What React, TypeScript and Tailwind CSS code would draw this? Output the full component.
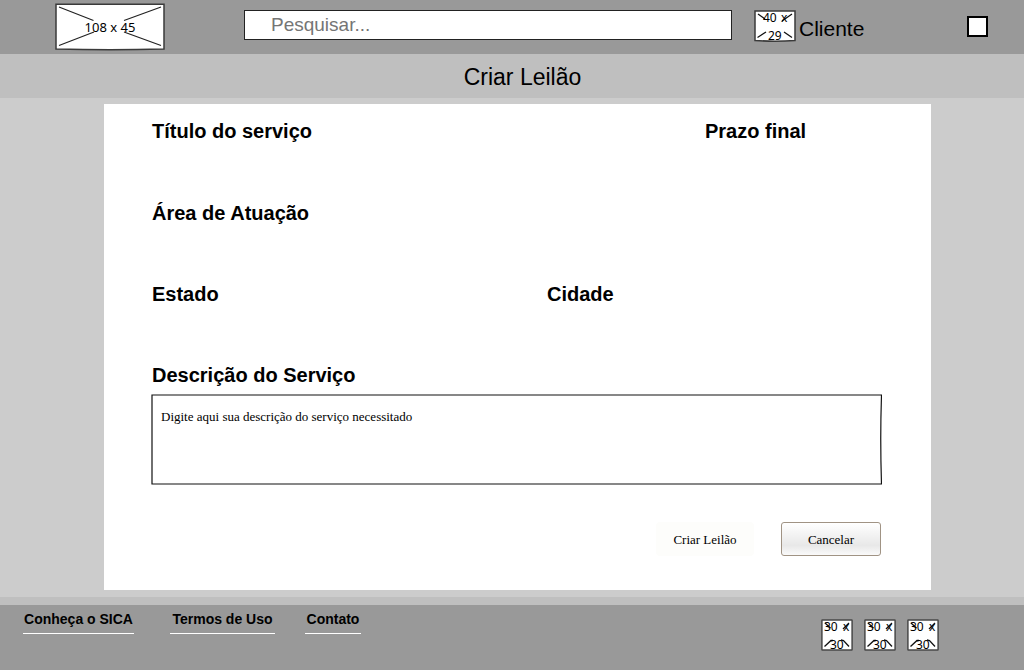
function SocialPlaceholder({ label }: { label: string }) {
  return (
    <a href="#" aria-label={label}>
      <svg width="32" height="32" viewBox="0 0 32 32" className="block overflow-visible font-['Noto_Sans',sans-serif]">
        <rect x="0.9" y="0.9" width="30.2" height="30.2" rx="0.5" fill="#fff" stroke="#484848" strokeWidth="1.5" />
        <path d="M4 4 9.5 9M28 4 22 10M3.5 27.5 10 21.5H12M20 21 22.5 21.5 28 27.5" fill="none" stroke="#111" strokeWidth="1.3" />
        <text x="3" y="12" fontSize="12">30</text>
        <text x="22" y="12" fontSize="12">x</text>
        <text x="9" y="30" fontSize="12">30</text>
      </svg>
    </a>
  );
}

function Logo() {
  return (
    <svg width="110" height="48" viewBox="0 0 110 48" className="block shrink-0 font-['Noto_Sans',sans-serif]">
      <path d="M1 1.2H109V46Q55 47.4 1 46Z" fill="#fff" stroke="#3a3a3a" strokeWidth="1.5" />
      <path d="M4 4 38.5 17.5M106 4 69 17.5M4 42.5 39 29M106 42.5 69 29" fill="none" stroke="#222" strokeWidth="1.2" />
      <text x="55" y="29" fontSize="13" textAnchor="middle">108 x 45</text>
    </svg>
  );
}

function Avatar() {
  return (
    <svg width="42" height="32" viewBox="0 0 42 32" className="block shrink-0 overflow-visible font-['Noto_Sans',sans-serif]">
      <path d="M1 1H41V30.5Q21 31.8 1 30.5Z" fill="#fff" stroke="#3a3a3a" strokeWidth="1.5" />
      <path d="M4 4 11 9M38 4 28 11M3.5 27.5 12 22M30 22 38 27.5" fill="none" stroke="#111" strokeWidth="1.3" />
      <text x="9" y="12" fontSize="12">40</text>
      <text x="27" y="12" fontSize="12">x</text>
      <text x="14" y="30" fontSize="12">29</text>
    </svg>
  );
}

const linkClass = "border-b border-white pb-1 text-center text-sm leading-5 font-bold";

export default function App() {
  return (
    <div className="flex min-h-screen flex-col bg-[#ccc] font-['Liberation_Sans',Arial,sans-serif] text-black">
      <header className="flex items-start bg-[#999] pt-[3px] pr-9 pb-[3px] pl-[55px]">
        <Logo />
        <input
          type="search"
          aria-label="Pesquisar"
          placeholder="Pesquisar..."
          className="mt-[7px] ml-[79px] h-[30px] min-w-0 flex-1 border border-[#222] bg-white px-[26px] text-[19px] outline-none placeholder:text-[#757575]"
        />
        <div className="mt-[7px] ml-[22px] flex w-[213px] shrink-0 items-start gap-[3px]">
          <Avatar />
          <span className="mt-[5px] text-[21px] leading-7">Cliente</span>
        </div>
        <input
          type="checkbox"
          aria-label="Menu"
          className="mt-[13px] h-[21px] w-[21px] shrink-0 appearance-none border-2 border-black bg-white"
        />
      </header>

      <h1 className="bg-[#bfbfbf] pt-[7px] pb-[5px] pl-[21px] text-center text-[23px] leading-8">Criar Leilão</h1>

      <main className="flex flex-1 flex-col pt-[6px] pr-[93px] pb-[7px] pl-[104px]">
        <form className="flex-1 bg-white pt-3 pr-12 pb-[34px] pl-12 text-xl font-bold">
          <div className="flex h-[82px] leading-[30px]">
            <h2 className="w-[553px]">Título do serviço</h2>
            <h2>Prazo final</h2>
          </div>
          <h2 className="h-[81px] leading-[30px]">Área de Atuação</h2>
          <div className="flex h-[81px] leading-[30px]">
            <h2 className="w-[395px]">Estado</h2>
            <h2>Cidade</h2>
          </div>
          <label htmlFor="description" className="block leading-[30px]">Descrição do Serviço</label>
          <div className="relative mt-1 mr-px -ml-px">
            <textarea
              id="description"
              defaultValue="Digite aqui sua descrição do serviço necessitado"
              className="block h-[91px] w-full resize-none bg-white px-[10px] py-[15px] font-['Liberation_Serif',serif] text-[13px] leading-4 font-normal outline-none"
            />
            <svg
              viewBox="0 0 731 91"
              preserveAspectRatio="none"
              className="pointer-events-none absolute inset-0 h-full w-full"
            >
              <path
                d="M1 1Q365 -0.5 730.5 1Q729 45 730.5 90Q365 88.5 1 90Z"
                fill="none"
                stroke="#111"
                strokeWidth="1.2"
                vectorEffect="non-scaling-stroke"
              />
            </svg>
          </div>
          <div className="mt-[37px] flex justify-end gap-[27px] pr-[2px] font-['Liberation_Serif',serif] text-[13px] font-normal">
            <button type="submit" className="h-[34px] w-[98px] rounded-sm bg-[#fdfdfb] pt-[2px]">Criar Leilão</button>
            <button
              type="button"
              className="h-[34px] w-[100px] rounded-[3px] border border-[#a09384] bg-linear-to-b from-white via-[#e8e8e8] via-70% to-[#fafafa] pt-[2px]"
            >
              Cancelar
            </button>
          </div>
        </form>
      </main>

      <footer className="flex items-start justify-between border-t-8 border-[#bfbfbf] bg-[#999] pt-1 pr-[85px] pb-[19px] pl-[23px]">
        <nav className="flex">
          <a href="#" className={`${linkClass} mr-9 min-w-[111px]`}>Conheça o SICA</a>
          <a href="#" className={`${linkClass} mr-[30px] min-w-[105px]`}>Termos de Uso</a>
          <a href="#" className={`${linkClass} min-w-14`}>Contato</a>
        </nav>
        <div className="mt-[10px] flex gap-[11px]">
          <SocialPlaceholder label="Rede social 1" />
          <SocialPlaceholder label="Rede social 2" />
          <SocialPlaceholder label="Rede social 3" />
        </div>
      </footer>
    </div>
  );
}
